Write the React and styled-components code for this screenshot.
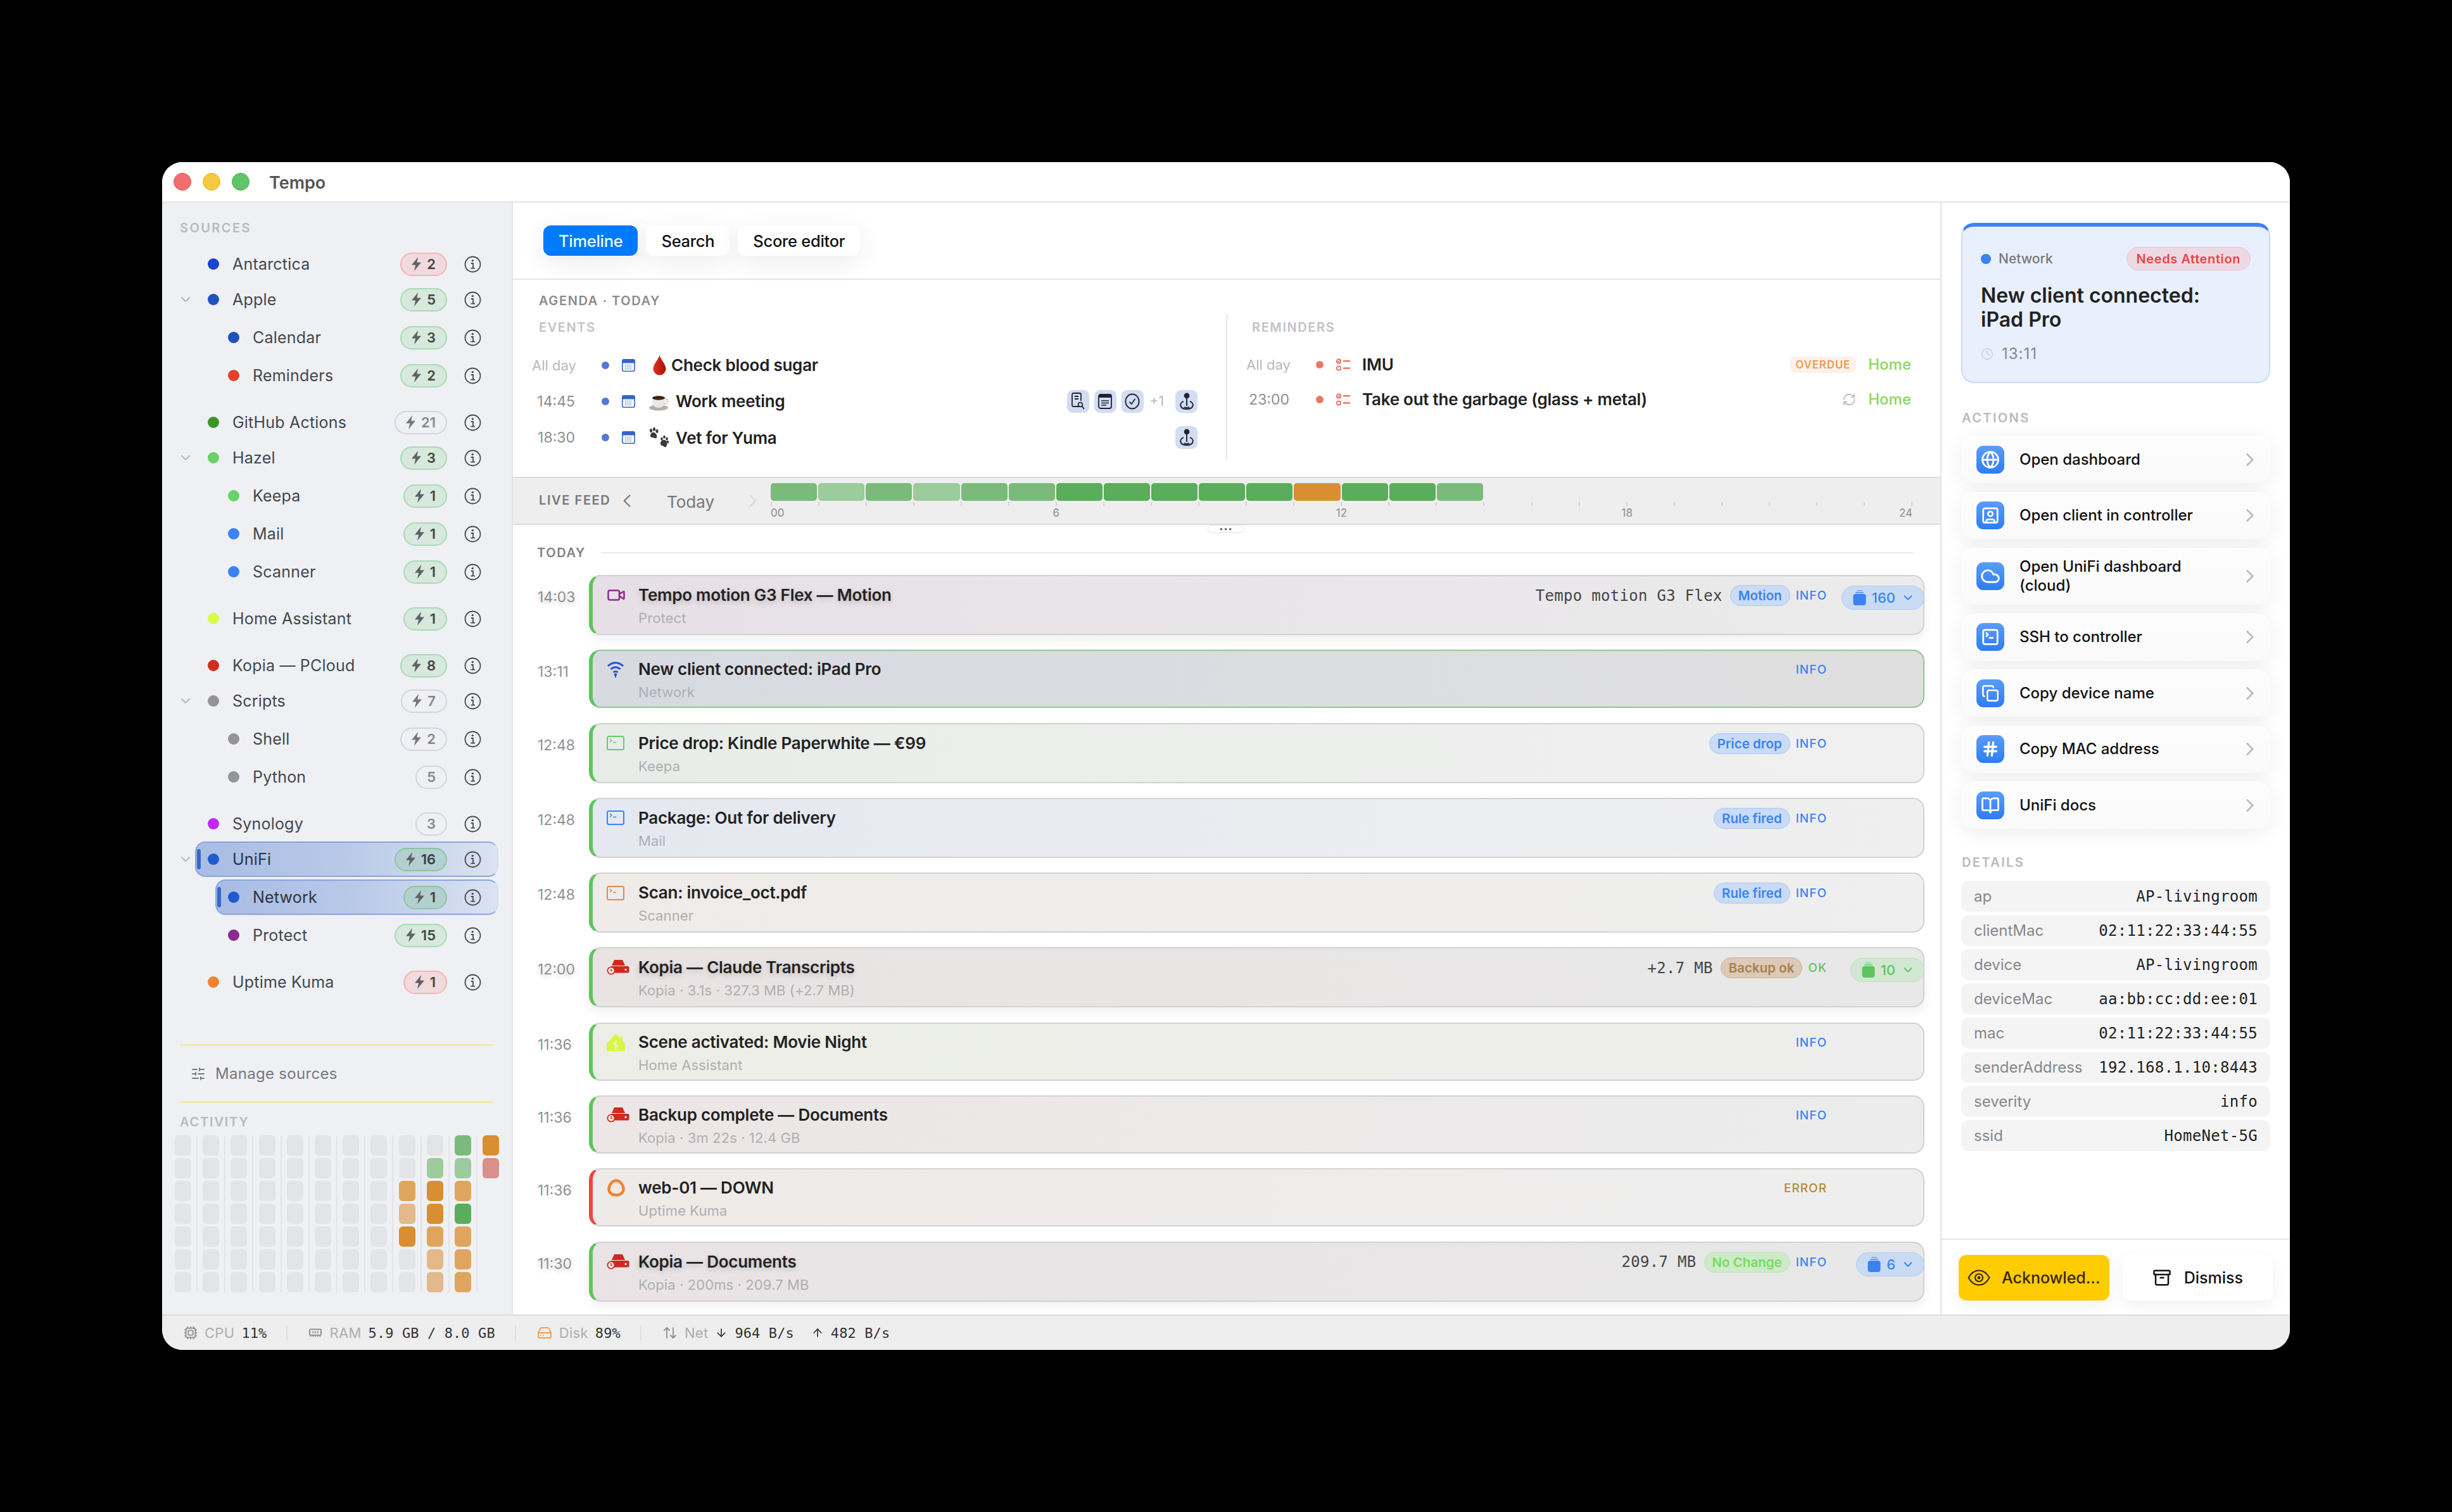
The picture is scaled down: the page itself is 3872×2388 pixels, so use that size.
import React from "react";
import styled, { createGlobalStyle } from "styled-components";
import {
  Archive,
  ArrowDown,
  ArrowUp,
  ArrowUpDown,
  BookOpen,
  ChevronDown,
  ChevronLeft,
  ChevronRight,
  Clock,
  Cloud,
  Copy,
  Cpu,
  Globe,
  Hash,
  HardDrive,
  MemoryStick,
  RefreshCw,
  SlidersHorizontal,
  SquareTerminal,
  SquareUser,
  Video,
} from "lucide-react";

const SANS = `Inter, "Noto Sans", "Liberation Sans", sans-serif`;
const MONO = `"DejaVu Sans Mono", "Liberation Mono", monospace`;

const GlobalStyle = createGlobalStyle`
  html, body {
    margin: 0;
    padding: 0;
    background: #000;
    font-family: ${SANS};
    width: 3872px;
    height: 2388px;
    overflow: hidden;
  }
  * { box-sizing: border-box; }
`;

const Page = styled.div`
  width: 3872px;
  height: 2388px;
  padding: 256px;
  background: #000;
`;

const Window = styled.div`
  width: 3360px;
  height: 1876px;
  border-radius: 32px;
  overflow: hidden;
  background: #fff;
  display: grid;
  grid-template-rows: 64px 1fr 56px;
`;

const TitleBar = styled.div`
  display: flex;
  align-items: center;
  padding-left: 18px;
  gap: 18px;
  border-bottom: 2px solid #e4e4e6;
  background: #fff;
`;

const Light = styled.span`
  width: 28px;
  height: 28px;
  border-radius: 50%;
  background: ${(p) => p.$bg};
  border: 1px solid ${(p) => p.$line};
`;

const AppName = styled.div`
  margin: 2px 0 0 13px;
  font-size: 27px;
  font-weight: 600;
  color: #555;
`;

const Body = styled.div`
  display: flex;
  min-height: 0;
`;

/* sidebar */

const Sidebar = styled.aside`
  width: 554px;
  flex: none;
  background: #eef0f4;
  border-right: 2px solid #e3e4e8;
  padding-top: 28px;
`;

const SmallHead = styled.div`
  font-size: 20px;
  line-height: 24px;
  font-weight: 600;
  letter-spacing: 2.4px;
  text-transform: uppercase;
  color: #b9b9bd;
`;

const SourcesHead = styled(SmallHead)`
  padding-left: 28px;
  margin-bottom: 17px;
`;

const TreeLine = styled.div`
  display: flex;
  align-items: center;
  padding: 0 21px 0 ${(p) => (p.$child ? 84 : 27)}px;
  margin-top: ${(p) => (p.$child ? 4 : 0)}px;
  margin-bottom: ${(p) => (p.$spaced ? 18 : 0)}px;
`;

const ChevronSlot = styled.div`
  width: 25px;
  flex: none;
  display: flex;
  margin-left: -2px;
  margin-right: 2px;
  color: #b4b4ba;
`;

const SourceRow = styled.div`
  position: relative;
  flex: 1;
  height: 56px;
  display: flex;
  align-items: center;
  padding: 0 25px 0 18px;
  border-radius: 16px;
  border: 2px solid transparent;
  ${(p) =>
    p.$active &&
    `
    background: linear-gradient(90deg, #a8bce4 0%, #b9c9e8 50%, #dbe2f1 100%);
    border-color: #88a5e0;
    border-right-color: #d6deef;
    &::before {
      content: "";
      position: absolute;
      left: 1px;
      top: 10px;
      bottom: 10px;
      width: 6px;
      border-radius: 3px;
      background: #3568cf;
    }
  `}
`;

const Dot = styled.span`
  width: ${(p) => p.$size || 18}px;
  height: ${(p) => p.$size || 18}px;
  border-radius: 50%;
  flex: none;
  background: ${(p) => p.$color};
`;

const SourceName = styled.div`
  flex: 1;
  margin-left: 21px;
  font-size: 25px;
  letter-spacing: 0.2px;
  color: ${(p) => (p.$active ? "#2e3340" : "#44474d")};
  font-weight: 400;
  white-space: nowrap;
`;

const BADGE = {
  green: { bg: "#d6e9dc", line: "#aadab3", fg: "#444" },
  red: { bg: "#f0dadd", line: "#f2b6b7", fg: "#444" },
  grey: { bg: "transparent", line: "#d4d5da", fg: "#86878c" },
  active: { bg: "#b3cfd0", line: "#8cc59e", fg: "#3a3f44" },
};

const Badge = styled.div`
  height: 37px;
  min-width: 45px;
  padding: 0 16px;
  margin-right: 27px;
  border-radius: 19px;
  display: flex;
  align-items: center;
  justify-content: center;
  gap: 9px;
  border: 2px solid ${(p) => BADGE[p.$tone].line};
  background: ${(p) => BADGE[p.$tone].bg};
  color: ${(p) => BADGE[p.$tone].fg};
  font-size: 22px;
  font-weight: 600;
`;

const Divider = styled.div`
  height: 3px;
  margin: ${(p) => p.$top || 0}px 30px 0 28px;
  background: #f5e7a2;
`;

const ManageRow = styled.div`
  height: 87px;
  display: flex;
  align-items: center;
  gap: 15px;
  padding-left: 45px;
  font-size: 24px;
  color: #77787d;
  letter-spacing: 0.3px;
`;

const ActivityHead = styled(SmallHead)`
  padding-left: 28px;
  margin-top: 18px;
  margin-bottom: 9px;
  letter-spacing: 1.8px;
`;

const ActivityGrid = styled.div`
  display: flex;
  padding-left: 20px;
`;

const ActivityCol = styled.div`
  display: flex;
  flex-direction: column;
  gap: 4px;
  padding-right: 8px;
  margin-right: 8.2px;
  border-right: 2px solid ${(p) => (p.$last ? "transparent" : "#e3e4e8")};
`;

const ActivityCell = styled.div`
  width: 26px;
  height: 32px;
  border-radius: 6px;
  background: ${(p) => p.$color};
`;

/* main column */

const Main = styled.main`
  flex: 1;
  min-width: 0;
  display: flex;
  flex-direction: column;
  background: #fff;
`;

const NavBar = styled.nav`
  height: 122px;
  flex: none;
  display: flex;
  align-items: flex-start;
  gap: 13px;
  padding: 36px 0 0 48px;
  border-bottom: 2px solid #e4e4e6;
  position: relative;
  z-index: 1;
`;

const Tab = styled.div`
  height: 48px;
  padding: 0 24px;
  display: flex;
  align-items: center;
  border-radius: 12px;
  font-size: 25.5px;
  font-weight: 500;
  letter-spacing: -0.3px;
  color: ${(p) => (p.$on ? "#e8fbff" : "#111")};
  background: ${(p) => (p.$on ? "#007aff" : "#fff")};
  box-shadow: 0 10px 40px rgba(0, 0, 0, 0.08);
`;

const Agenda = styled.section`
  height: 311px;
  flex: none;
  position: relative;
  z-index: 1;
  padding-top: 21px;
`;

const AgendaHead = styled(SmallHead)`
  padding-left: 41px;
  color: #8a8a8e;
  letter-spacing: 1.6px;
`;

const AgendaCols = styled.div`
  display: flex;
  margin-top: 9px;
`;

const AgendaCol = styled.div`
  flex: ${(p) => (p.$grow ? "0 0 1126px" : "1")};
  min-height: 231px;
  padding-top: 9px;
  padding-right: ${(p) => (p.$grow ? 45 : 46)}px;
  ${(p) => !p.$grow && `border-left: 2px solid #e9e9eb; padding-left: 30px;`}
  ${(p) => p.$grow && `padding-left: 30px;`}
`;

const ColHead = styled(SmallHead)`
  color: #c2c2c6;
  letter-spacing: 1.6px;
  padding-left: ${(p) => p.$inset}px;
  margin-bottom: 19px;
`;

const AgendaRow = styled.div`
  height: ${(p) => p.$h || 57}px;
  display: flex;
  align-items: center;
`;

const AgendaTime = styled.div`
  width: 68px;
  flex: none;
  text-align: right;
  font-size: ${(p) => (p.$faint ? 22 : 23)}px;
  white-space: nowrap;
  color: ${(p) => (p.$faint ? "#b9b9bd" : "#8e8e92")};
`;

const AgendaDot = styled(Dot)`
  margin: 0 20px 0 42px;
`;

const Emoji = styled.span`
  display: flex;
  flex: none;
  margin-left: ${(p) => p.$left}px;
  margin-right: ${(p) => p.$right}px;
`;

const AgendaTitle = styled.div`
  flex: 1;
  margin-left: ${(p) => p.$left || 0}px;
  font-size: 26px;
  font-weight: 600;
  letter-spacing: -0.25px;
  color: #222;
  white-space: nowrap;
`;

const MiniChip = styled.span`
  width: 35px;
  height: 36px;
  border-radius: 9px;
  background: #d3dcf3;
  display: flex;
  align-items: center;
  justify-content: center;
  margin-left: ${(p) => p.$left || 8}px;
`;

const PlusOne = styled.span`
  margin-left: 10px;
  font-size: 21px;
  color: #b9b9bd;
`;

const Overdue = styled.span`
  height: 26px;
  padding: 0 9px;
  border-radius: 9px;
  display: flex;
  align-items: center;
  font-size: 17px;
  font-weight: 600;
  letter-spacing: 0.8px;
  color: #f19a4f;
  background: #fdf2ea;
  margin-right: 19px;
`;

const Place = styled.span`
  font-size: 24px;
  font-weight: 500;
  color: #8fd45f;
`;

const LiveBar = styled.div`
  position: relative;
  height: 76px;
  flex: none;
  display: flex;
  align-items: flex-start;
  background: #eeeeee;
  border-top: 2px solid #dcdcdc;
  border-bottom: 2px solid #dcdcdc;
`;

const LiveHead = styled(SmallHead)`
  color: #77777b;
  margin: 23px 0 0 41px;
  letter-spacing: 1.6px;
  width: 122px;
  white-space: nowrap;
`;

const BarNav = styled.div`
  display: flex;
  align-items: center;
  height: 72px;
  color: ${(p) => (p.$faint ? "#d6d6d8" : "#777")};
`;

const TodayText = styled.div`
  font-size: 26px;
  color: #77777b;
  margin-left: 46px;
  width: 119px;
  line-height: 76px;
`;

const Timeline = styled.div`
  position: absolute;
  left: 407px;
  top: 8px;
  width: 1803px;
`;

const BarRow = styled.div`
  display: flex;
  height: 28px;
`;

const HourBar = styled.div`
  width: 75.125px;
  padding-right: 2px;
  &::after {
    content: "";
    display: block;
    height: 100%;
    border-radius: 5px;
    background: ${(p) => p.$color};
  }
`;

const TickRow = styled.div`
  display: flex;
  justify-content: space-between;
  margin-top: 2px;
`;

const Tick = styled.span`
  width: 2px;
  height: 6px;
  background: #d2d2d4;
`;

const AxisRow = styled.div`
  display: flex;
  justify-content: space-between;
  margin-top: 1px;
  font-size: 17px;
  color: #8c8c90;
`;

const AxisLabel = styled.span`
  width: 0;
  display: flex;
  white-space: nowrap;
  justify-content: ${(p) => p.$align || "center"};
`;

const Handle = styled.div`
  position: absolute;
  left: 1097px;
  bottom: -15px;
  width: 58px;
  height: 13px;
  background: #fff;
  border: 1px solid #e2e2e4;
  border-radius: 6px;
  display: flex;
  align-items: center;
  justify-content: center;
  gap: 2px;
  &::before {
    content: "•••";
    font-size: 11px;
    letter-spacing: 1px;
    color: #66666a;
    line-height: 11px;
  }
`;

const Feed = styled.div`
  flex: 1;
  min-height: 0;
  overflow: hidden;
  padding: 30px 25px 0 38px;
`;

const FeedHead = styled.div`
  display: flex;
  align-items: center;
  gap: 25px;
  height: 28px;
  margin-bottom: 21px;
`;

const FeedHeadLabel = styled(SmallHead)`
  color: #808084;
  letter-spacing: 1.6px;
`;

const FeedHeadRule = styled.div`
  flex: 1;
  height: 2px;
  background: #e8e8ea;
  margin-right: 18px;
`;

const FeedList = styled.div`
  display: flex;
  flex-direction: column;
  gap: 23.3px;
`;

const FeedRow = styled.div`
  display: flex;
`;

const FeedTime = styled.div`
  width: 82px;
  flex: none;
  padding-top: 21px;
  padding-left: 1px;
  font-size: 23px;
  line-height: 28px;
  color: #8f8f93;
  ${(p) => p.$stacked && `text-shadow: 0 3px 8px rgba(0, 0, 0, 0.22);`}
`;

const Card = styled.article`
  position: relative;
  flex: 1;
  height: ${(p) => (p.$tall ? 95 : 92)}px;
  display: flex;
  align-items: flex-start;
  padding: ${(p) => (p.$tall ? 14 : 13)}px 152px 0 22px;
  border-radius: 18px;
  border: 2px solid ${(p) => (p.$selected ? "#8dca8d" : "#d2d2d2")};
  border-left: 6px solid ${(p) => p.$bar};
  background: linear-gradient(90deg, ${(p) => p.$tint} 0%, ${(p) => p.$end} 100%);
  ${(p) => p.$stacked && `box-shadow: 0 8px 16px rgba(0, 0, 0, 0.06);`}
`;

const CardIcon = styled.div`
  width: 50px;
  flex: none;
  height: 32px;
  display: flex;
  align-items: center;
`;

const CardText = styled.div`
  flex: 1;
  min-width: 0;
`;

const CardTitle = styled.div`
  font-size: 26px;
  line-height: 32px;
  font-weight: 600;
  letter-spacing: -0.25px;
  color: #222;
  white-space: nowrap;
  ${(p) => p.$stacked && `text-shadow: 0 3px 8px rgba(0, 0, 0, 0.2);`}
`;

const CardSub = styled.div`
  margin-top: 6px;
  font-size: 22px;
  letter-spacing: 0.1px;
  line-height: 28px;
  color: #aeaeb2;
  white-space: nowrap;
`;

const CardMeta = styled.div`
  display: flex;
  align-items: center;
  height: 33px;
  gap: 9px;
`;

const MonoText = styled.span`
  font-family: ${MONO};
  font-size: 24px;
  letter-spacing: 0.3px;
  color: #444;
  margin-right: 3px;
  white-space: nowrap;
`;

const TAG = {
  blue: { bg: "#c9dbf5", line: "#a9c8f7", fg: "#3b82f6" },
  brown: { bg: "#dcc9b7", line: "#ceb196", fg: "#a9804f" },
  green: { bg: "#cfe9cb", line: "#bde6b9", fg: "#74df55" },
};

const Tag = styled.span`
  height: 33px;
  padding: 0 12px;
  border-radius: 17px;
  display: flex;
  align-items: center;
  font-size: 20.5px;
  font-weight: 600;
  white-space: nowrap;
  border: 1px solid ${(p) => TAG[p.$tone].line};
  background: ${(p) => TAG[p.$tone].bg};
  color: ${(p) => TAG[p.$tone].fg};
`;

const LEVEL = { INFO: "#3b82f6", OK: "#5fc45f", ERROR: "#b78a2f" };

const Level = styled.span`
  font-size: 19px;
  font-weight: 500;
  letter-spacing: 1px;
  color: ${(p) => LEVEL[p.$level]};
`;

const STACK = {
  blue: { bg: "#c9dbf3", line: "#aecbf5", fg: "#3b82f6" },
  green: { bg: "#d2e7d2", line: "#b9e2b9", fg: "#5fc45f" },
};

const StackChip = styled.div`
  position: absolute;
  right: -2px;
  top: 15px;
  height: 38px;
  padding: 0 14px 0 17px;
  border-radius: 19px;
  display: flex;
  align-items: center;
  gap: 9px;
  border: 1px solid ${(p) => STACK[p.$tone].line};
  background: ${(p) => STACK[p.$tone].bg};
  color: ${(p) => STACK[p.$tone].fg};
  font-size: 22px;
  font-weight: 500;
`;

/* right panel */

const Panel = styled.aside`
  width: 552px;
  flex: none;
  display: flex;
  flex-direction: column;
  border-left: 2px solid #e4e4e6;
`;

const PanelScroll = styled.div`
  flex: 1;
  min-height: 0;
  padding: 32px 31px 0 31px;
`;

const Summary = styled.div`
  height: 253px;
  border-radius: 20px;
  border: 2px solid #c5dbfb;
  border-top: 6px solid #3b82f6;
  background: #e9f0fd;
  padding: 33px 29px 0 29px;
`;

const SummaryTop = styled.div`
  display: flex;
  align-items: center;
  height: 37px;
  margin-top: -1px;
`;

const SummarySource = styled.div`
  flex: 1;
  margin-left: 12px;
  font-size: 21px;
  font-weight: 500;
  color: #77787d;
`;

const Attention = styled.div`
  height: 37px;
  padding: 0 15px;
  border-radius: 19px;
  display: flex;
  align-items: center;
  border: 1px solid #f3c0c8;
  background: #edd9e3;
  color: #ef4444;
  font-size: 20px;
  font-weight: 600;
  letter-spacing: 0.6px;
`;

const SummaryTitle = styled.div`
  margin-top: 21px;
  font-size: 32px;
  line-height: 38px;
  font-weight: 600;
  color: #222;
`;

const SummaryTime = styled.div`
  margin-top: 20px;
  display: flex;
  align-items: center;
  gap: 13px;
  font-size: 24px;
  color: #85868b;
  letter-spacing: 1px;
`;

const PanelHead = styled(SmallHead)`
  margin-top: ${(p) => p.$top}px;
  margin-bottom: ${(p) => p.$bottom}px;
  padding-left: 1px;
`;

const ActionList = styled.div`
  display: flex;
  flex-direction: column;
  gap: 13.5px;
`;

const Action = styled.div`
  min-height: ${(p) => (p.$wide ? 90 : 75)}px;
  padding: 0 24px;
  display: flex;
  align-items: center;
  background: linear-gradient(180deg, #fdfdfd, #fafafa);
  border-radius: 20px;
  box-shadow: 0 6px 32px rgba(0, 0, 0, 0.07);
  color: #bdbdc0;
`;

const ActionIcon = styled.span`
  width: 44px;
  height: 44px;
  flex: none;
  border-radius: 11px;
  background: linear-gradient(180deg, #5b9cfc, #2f7cf0);
  display: flex;
  align-items: center;
  justify-content: center;
  color: #fff;
`;

const ActionLabel = styled.div`
  flex: 1;
  margin-left: 24px;
  font-size: 24px;
  line-height: 30px;
  font-weight: 500;
  color: #111;
  max-width: 320px;
`;

const ActionArrow = styled.span`
  display: flex;
  margin-left: auto;
  margin-right: -9px;
`;

const DetailList = styled.div`
  display: flex;
  flex-direction: column;
  gap: 5px;
`;

const DetailRow = styled.div`
  height: 49px;
  padding: 0 20px;
  display: flex;
  align-items: center;
  justify-content: space-between;
  background: #f4f4f5;
  border-radius: 12px;
`;

const DetailKey = styled.span`
  font-size: 24px;
  color: #87878b;
`;

const DetailValue = styled.span`
  font-family: ${MONO};
  font-size: 24px;
  letter-spacing: 0.3px;
  color: #222;
`;

const PanelFooter = styled.div`
  height: 120px;
  flex: none;
  display: flex;
  gap: 21px;
  padding: 24px 27px 0 27px;
  border-top: 2px solid #e4e4e6;
`;

const FooterButton = styled.div`
  flex: 1;
  height: 72px;
  display: flex;
  align-items: center;
  justify-content: center;
  gap: ${(p) => (p.$main ? 18 : 20)}px;
  border-radius: 12px;
  font-size: 25px;
  font-weight: 500;
  white-space: nowrap;
  color: ${(p) => (p.$main ? "#3a2500" : "#111")};
  background: ${(p) => (p.$main ? "#ffcc00" : "#fff")};
  box-shadow: 0 8px 24px rgba(0, 0, 0, 0.06);
`;

/* status bar */

const StatusBar = styled.footer`
  display: flex;
  align-items: center;
  padding-left: 34px;
  background: #eeeeee;
  border-top: 2px solid #dcdcdc;
`;

const StatusItem = styled.div`
  display: flex;
  align-items: center;
  gap: 11px;
  color: ${(p) => p.$icon || "#8e8e92"};
  padding-right: 31px;
  margin-right: 33px;
  border-right: ${(p) => (p.$end ? "none" : "2px solid #dedede")};
  height: 24px;
`;

const StatusLabel = styled.span`
  font-size: 22px;
  letter-spacing: 0.3px;
  color: #adadb1;
`;

const StatusValue = styled.span`
  font-family: ${MONO};
  font-size: 22px;
  letter-spacing: 0.1px;
  color: #333;
  white-space: nowrap;
`;

/* drawings */

const Bolt = ({ dim }) => (
  <svg width="15" height="22" viewBox="0 0 15 22">
    <path d="M10 0 0 12.6h6.2L4 22l11-13.4H8.4L10 0z" fill={dim ? "#777" : "#5e6166"} />
  </svg>
);

const InfoIcon = () => (
  <svg width="27" height="27" viewBox="0 0 27 27" fill="none" style={{ flex: "none" }}>
    <circle cx="13.5" cy="13.5" r="12" stroke="#45474c" strokeWidth="1.8" />
    <circle cx="13.3" cy="7.6" r="1.7" fill="#45474c" />
    <path d="M10.8 12h3.2v7.4M10.4 19.6h6.6" stroke="#45474c" strokeWidth="1.8" />
  </svg>
);

const CalendarIcon = () => (
  <svg width="21" height="20" viewBox="0 0 21 20" style={{ flex: "none" }}>
    <rect x="0.8" y="0.8" width="19.4" height="18.4" rx="2.4" fill="#fff" stroke="#3565c7" strokeWidth="1.6" />
    <path d="M1 3a2 2 0 0 1 2-2h15a2 2 0 0 1 2 2v3.5H1z" fill="#3565c7" />
    <path d="M5 9.5h11M5 12.5h11M5 15.5h11" stroke="#6a8bd4" strokeWidth="1.6" strokeDasharray="1.6 1.2" />
  </svg>
);

const RemindIcon = () => (
  <svg width="23" height="20" viewBox="0 0 23 20" fill="none" style={{ flex: "none" }}>
    <circle cx="4" cy="4.4" r="3.2" stroke="#ea5a45" strokeWidth="1.5" />
    <path d="M2.5 4.4l1.2 1.2L5.6 3" stroke="#ea5a45" strokeWidth="1.2" />
    <circle cx="4" cy="15.6" r="3.2" stroke="#ea5a45" strokeWidth="1.5" />
    <path d="M11 4.2h11M11 15.6h11" stroke="#ea5a45" strokeWidth="2" />
  </svg>
);

const DropEmoji = () => (
  <svg width="21" height="32" viewBox="0 0 21 32">
    <defs>
      <linearGradient id="drop" x1="0" x2="1">
        <stop offset="0" stopColor="#e0301e" />
        <stop offset="1" stopColor="#a81208" />
      </linearGradient>
    </defs>
    <path d="M10.5 0c1 6 10 14 10 21.5a10 10 0 0 1-20 0C.5 14 9.5 6 10.5 0z" fill="url(#drop)" />
  </svg>
);

const CoffeeEmoji = () => (
  <svg width="33" height="30" viewBox="0 0 33 30">
    <path d="M14 1c-1 2 1 3 0 5" stroke="#d8d8d8" strokeWidth="1" fill="none" />
    <ellipse cx="16" cy="25" rx="15" ry="4.5" fill="#b5b0a8" />
    <path d="M6 9h20v6c0 6-4 10-10 10S6 21 6 15z" fill="#ece9e4" />
    <path d="M26 11c6-1 6 8-2 8" stroke="#d6d2cb" strokeWidth="2" fill="none" />
    <ellipse cx="16" cy="9.5" rx="10" ry="3.2" fill="#3b2415" />
  </svg>
);

const PawEmoji = () => (
  <svg width="33" height="32" viewBox="0 0 33 32" fill="#3a3a3c">
    <ellipse cx="4" cy="5" rx="2" ry="3" />
    <ellipse cx="9" cy="3" rx="2" ry="3" />
    <ellipse cx="13.5" cy="6" rx="2" ry="3" />
    <path d="M3 13c0-4 3-6 6-5s5 5 4 8-4 0-6 0-4 0-4-3z" />
    <ellipse cx="21" cy="18" rx="1.8" ry="2.6" />
    <ellipse cx="25" cy="15" rx="1.8" ry="2.6" />
    <ellipse cx="29" cy="18" rx="1.8" ry="2.6" />
    <ellipse cx="30.5" cy="23" rx="1.6" ry="2.2" />
    <path d="M19 25c0-4 4-6 7-5s4 4 3 8-3 4-5 2-5 0-5-5z" />
  </svg>
);

const DocSearch = () => (
  <svg width="22" height="28" viewBox="0 0 22 28" fill="none" stroke="#1d2433" strokeWidth="1.8">
    <path d="M15 22H4a2 2 0 0 1-2-2V3a2 2 0 0 1 2-2h10a2 2 0 0 1 2 2v10" />
    <path d="M6 6h6M6 10h6" />
    <circle cx="15" cy="19" r="3.4" />
    <path d="M17.6 21.6 21 26" />
  </svg>
);

const NotesIcon = () => (
  <svg width="22" height="24" viewBox="0 0 22 24" fill="none">
    <rect x="1" y="1" width="20" height="22" rx="3" stroke="#1d2433" strokeWidth="1.8" />
    <path d="M1 3a2 2 0 0 1 2-2h16a2 2 0 0 1 2 2v3H1z" fill="#1d2433" />
    <path d="M5 11h12M5 14.5h12M5 18h8" stroke="#1d2433" strokeWidth="1.6" />
  </svg>
);

const CheckRound = () => (
  <svg width="24" height="26" viewBox="0 0 24 26" fill="none" stroke="#1d2433" strokeWidth="1.8">
    <ellipse cx="12" cy="13" rx="10.6" ry="11.5" />
    <path d="M7.5 13.5l3 3.5 6-8" />
  </svg>
);

const JoyIcon = () => (
  <svg width="24" height="28" viewBox="0 0 24 28" fill="none" stroke="#1d2433" strokeWidth="2">
    <circle cx="12" cy="5" r="3.4" fill="#1d2433" />
    <path d="M12 8v13" />
    <path d="M7 14c-7 2-7 12 5 12s12-10 5-12" />
    <path d="M8 23c2 1 6 1 8 0" />
  </svg>
);

const KopiaIcon = () => (
  <svg width="36" height="24" viewBox="0 0 36 24">
    <path d="M12 0h13l4 9H8z" fill="#cf2a1b" />
    <path d="M7 10h26a2.6 2.6 0 0 1 2.6 2.6V18a2.6 2.6 0 0 1-2.6 2.6H7z" fill="#cf2a1b" />
    <circle cx="30" cy="15.4" r="1.7" fill="#fff" />
    <circle cx="7" cy="17" r="5.6" fill="#f2e9e8" stroke="#cf2a1b" strokeWidth="1.8" />
    <path d="M7 14v3.4h2" stroke="#cf2a1b" strokeWidth="1.4" fill="none" />
  </svg>
);

const HomeIcon = () => (
  <svg width="29" height="28" viewBox="0 0 29 28">
    <path d="M14.5 0 22 8v-3h3v7l4 4v12H0V16z" fill="#d9f54a" />
    <path d="M14.5 26V11M14.5 19l-4-4M14.5 22l4-4" stroke="#f0f3e4" strokeWidth="1.6" fill="none" />
  </svg>
);

const KumaIcon = () => (
  <svg width="30" height="28" viewBox="0 0 30 28" fill="none">
    <path d="M15 2.5c6 0 11.5 7 11.5 14 0 5.500-5 9-11.500 9S3.500 22 3.500 16.500C3.500 9.500 9 2.500 15 2.500z" stroke="#f2842f" strokeWidth="4.4" />
  </svg>
);

const WifiIcon = () => (
  <svg width="28" height="28" viewBox="0 0 28 28" fill="none" stroke="#2259c9" strokeWidth="3">
    <path d="M2 9c7-7 17-7 24 0" />
    <path d="M6.500 14c4.500-4.500 10.500-4.500 15 0" />
    <path d="M10.500 19c2-2 5-2 7 0" />
    <path d="M14 22v5" strokeWidth="2" />
    <circle cx="14" cy="22.500" r="2.200" fill="#2259c9" stroke="none" />
  </svg>
);

const TermIcon = ({ color }) => (
  <svg width="28" height="23" viewBox="0 0 28 23" fill="none" stroke={color}>
    <rect x="1" y="1" width="26" height="21" rx="2.500" strokeWidth="2" />
    <path d="M5 5l3 2.600-3 2.600M10 10.500h5" strokeWidth="1.400" />
  </svg>
);

const StackGlyph = ({ color }) => (
  <svg width="21" height="24" viewBox="0 0 21 24" fill={color}>
    <rect x="6" y="0" width="9" height="1.600" rx="0.800" opacity="0.6" />
    <rect x="4" y="3" width="13" height="1.800" rx="0.900" opacity="0.8" />
    <rect x="0.500" y="6" width="20" height="18" rx="4" />
  </svg>
);

const EyeIcon = () => (
  <svg width="36" height="28" viewBox="0 0 36 28" fill="none" stroke="#3a2500" strokeWidth="2.200">
    <path d="M1.500 14C6 6 11 2.500 18 2.500S30 6 34.500 14C30 22 25 25.500 18 25.500S6 22 1.500 14z" />
    <circle cx="18" cy="14" r="6" />
    <circle cx="18" cy="14" r="2.400" fill="#3a2500" stroke="none" />
  </svg>
);

/* data */

const DOTS = {
  navy: "#1a43d0",
  royal: "#2150c0",
  red: "#e44226",
  forest: "#3f9428",
  mint: "#68d168",
  blue: "#3b82f6",
  lime: "#dcfb4c",
  kopia: "#d22d1c",
  grey: "#939398",
  violet: "#c227f5",
  unifi: "#2059d0",
  plum: "#8b2a8f",
  orange: "#f0812f",
};

const SOURCES = [
  { name: "Antarctica", dot: DOTS.navy, tone: "red", n: 2 },
  { name: "Apple", dot: DOTS.royal, tone: "green", n: 5, open: true },
  { name: "Calendar", dot: DOTS.royal, tone: "green", n: 3, child: true },
  { name: "Reminders", dot: DOTS.red, tone: "green", n: 2, child: true, spaced: true },
  { name: "GitHub Actions", dot: DOTS.forest, tone: "grey", n: 21 },
  { name: "Hazel", dot: DOTS.mint, tone: "green", n: 3, open: true },
  { name: "Keepa", dot: DOTS.mint, tone: "green", n: 1, child: true },
  { name: "Mail", dot: DOTS.blue, tone: "green", n: 1, child: true },
  { name: "Scanner", dot: DOTS.blue, tone: "green", n: 1, child: true, spaced: true },
  { name: "Home Assistant", dot: DOTS.lime, tone: "green", n: 1, spaced: true },
  { name: "Kopia — PCloud", dot: DOTS.kopia, tone: "green", n: 8 },
  { name: "Scripts", dot: DOTS.grey, tone: "grey", n: 7, open: true },
  { name: "Shell", dot: DOTS.grey, tone: "grey", n: 2, child: true },
  { name: "Python", dot: DOTS.grey, tone: "grey", n: 5, child: true, spaced: true, plain: true },
  { name: "Synology", dot: DOTS.violet, tone: "grey", n: 3, plain: true },
  { name: "UniFi", dot: DOTS.unifi, tone: "active", n: 16, open: true, active: true },
  { name: "Network", dot: DOTS.unifi, tone: "active", n: 1, child: true, active: true },
  { name: "Protect", dot: DOTS.plum, tone: "green", n: 15, child: true, spaced: true },
  { name: "Uptime Kuma", dot: DOTS.orange, tone: "red", n: 1 },
];

const C = {
  e: "#e3e4e8",
  g: "#7aba7a",
  l: "#9ccb9c",
  d: "#5aad5a",
  o: "#d98e32",
  m: "#dfa55f",
  p: "#e3b88a",
  r: "#d98f8a",
};

const ACTIVITY = [
  "eeeeeee",
  "eeeeeee",
  "eeeeeee",
  "eeeeeee",
  "eeeeeee",
  "eeeeeee",
  "eeeeeee",
  "eeeeeee",
  "eempoee",
  "eloompp",
  "glmdmmm",
  "or",
];

const HOURS = "glglggdddddoddg".split("");

const FEED = [
  { time: "14:03", title: "Tempo motion G3 Flex — Motion", sub: "Protect", icon: <Video size={30} color="#8b2a8f" strokeWidth={2} />, tint: "#e6e0e6", end: "#ebebeb", mono: "Tempo motion G3 Flex", tag: ["blue", "Motion"], level: "INFO", stack: ["blue", 160], tall: true },
  { time: "13:11", title: "New client connected: iPad Pro", sub: "Network", icon: <WifiIcon />, tint: "#d8dae2", end: "#dfdfdf", level: "INFO", selected: true },
  { time: "12:48", title: "Price drop: Kindle Paperwhite — €99", sub: "Keepa", icon: <TermIcon color="#63cf63" />, tint: "#e8ece8", end: "#f0f0f0", tag: ["blue", "Price drop"], level: "INFO", tall: true },
  { time: "12:48", title: "Package: Out for delivery", sub: "Mail", icon: <TermIcon color="#3b82f6" />, tint: "#e5e8f0", end: "#efefef", tag: ["blue", "Rule fired"], level: "INFO", tall: true },
  { time: "12:48", title: "Scan: invoice_oct.pdf", sub: "Scanner", icon: <TermIcon color="#e08a4a" />, tint: "#eeebe8", end: "#efefef", tag: ["blue", "Rule fired"], level: "INFO", tall: true },
  { time: "12:00", title: "Kopia — Claude Transcripts", sub: "Kopia · 3.1s · 327.3 MB (+2.7 MB)", icon: <KopiaIcon />, tint: "#e9e3e3", end: "#e8e8e8", mono: "+2.7 MB", tag: ["brown", "Backup ok"], level: "OK", stack: ["green", 10], tall: true },
  { time: "11:36", title: "Scene activated: Movie Night", sub: "Home Assistant", icon: <HomeIcon />, tint: "#eceee6", end: "#eeeeee", level: "INFO" },
  { time: "11:36", title: "Backup complete — Documents", sub: "Kopia · 3m 22s · 12.4 GB", icon: <KopiaIcon />, tint: "#ece6e6", end: "#ececec", level: "INFO" },
  { time: "11:36", title: "web-01 — DOWN", sub: "Uptime Kuma", icon: <KumaIcon />, tint: "#eeeae8", end: "#eeeeee", level: "ERROR", bar: "#ef4444" },
  { time: "11:30", title: "Kopia — Documents", sub: "Kopia · 200ms · 209.7 MB", icon: <KopiaIcon />, tint: "#e9e3e5", end: "#e8e8e8", mono: "209.7 MB", tag: ["green", "No Change"], level: "INFO", stack: ["blue", 6], tall: true },
];

const ACTIONS = [
  { label: "Open dashboard", icon: <Globe size={30} strokeWidth={2.2} /> },
  { label: "Open client in controller", icon: <SquareUser size={30} strokeWidth={2.2} /> },
  { label: "Open UniFi dashboard (cloud)", icon: <Cloud size={32} strokeWidth={2.2} />, wide: true },
  { label: "SSH to controller", icon: <SquareTerminal size={30} strokeWidth={2.2} /> },
  { label: "Copy device name", icon: <Copy size={28} strokeWidth={2.2} /> },
  { label: "Copy MAC address", icon: <Hash size={28} strokeWidth={2.8} /> },
  { label: "UniFi docs", icon: <BookOpen size={30} strokeWidth={2.2} /> },
];

const DETAILS = [
  ["ap", "AP-livingroom"],
  ["clientMac", "02:11:22:33:44:55"],
  ["device", "AP-livingroom"],
  ["deviceMac", "aa:bb:cc:dd:ee:01"],
  ["mac", "02:11:22:33:44:55"],
  ["senderAddress", "192.168.1.10:8443"],
  ["severity", "info"],
  ["ssid", "HomeNet-5G"],
];

const Source = ({ item }) => (
  <TreeLine $child={item.child} $spaced={item.spaced}>
    {!item.child && <ChevronSlot>{item.open && <ChevronDown size={24} strokeWidth={1.8} />}</ChevronSlot>}
    <SourceRow $active={item.active}>
      <Dot $color={item.dot} />
      <SourceName $active={item.active}>{item.name}</SourceName>
      <Badge $tone={item.tone}>
        {!item.plain && <Bolt dim={item.tone === "grey"} />}
        {item.n}
      </Badge>
      <InfoIcon />
    </SourceRow>
  </TreeLine>
);

export default function App() {
  return (
    <Page>
      <GlobalStyle />
      <Window>
        <TitleBar>
          <Light $bg="#f26d6d" $line="#e65353" />
          <Light $bg="#f5c842" $line="#ecb81f" />
          <Light $bg="#62c466" $line="#45b44c" />
          <AppName>Tempo</AppName>
        </TitleBar>

        <Body>
          <Sidebar>
            <SourcesHead>Sources</SourcesHead>
            {SOURCES.map((s) => (
              <Source key={s.name} item={s} />
            ))}
            <Divider $top={70} />
            <ManageRow>
              <SlidersHorizontal size={24} strokeWidth={1.8} />
              Manage sources
            </ManageRow>
            <Divider />
            <ActivityHead>Activity</ActivityHead>
            <ActivityGrid>
              {ACTIVITY.map((col, i) => (
                <ActivityCol key={i} $last={i === ACTIVITY.length - 1}>
                  {col.split("").map((c, j) => (
                    <ActivityCell key={j} $color={C[c]} />
                  ))}
                </ActivityCol>
              ))}
            </ActivityGrid>
          </Sidebar>

          <Main>
            <NavBar>
              <Tab $on>Timeline</Tab>
              <Tab>Search</Tab>
              <Tab>Score editor</Tab>
            </NavBar>

            <Agenda>
              <AgendaHead>Agenda · Today</AgendaHead>
              <AgendaCols>
                <AgendaCol $grow>
                  <ColHead $inset={11}>Events</ColHead>
                  <AgendaRow>
                    <AgendaTime $faint>All day</AgendaTime>
                    <AgendaDot $size={12} $color="#5279d4" />
                    <CalendarIcon />
                    <Emoji $left={28} $right={8}><DropEmoji /></Emoji>
                    <AgendaTitle>Check blood sugar</AgendaTitle>
                  </AgendaRow>
                  <AgendaRow>
                    <AgendaTime>14:45</AgendaTime>
                    <AgendaDot $size={12} $color="#5279d4" />
                    <CalendarIcon />
                    <Emoji $left={21} $right={10}><CoffeeEmoji /></Emoji>
                    <AgendaTitle>Work meeting</AgendaTitle>
                    <MiniChip><DocSearch /></MiniChip>
                    <MiniChip><NotesIcon /></MiniChip>
                    <MiniChip><CheckRound /></MiniChip>
                    <PlusOne>+1</PlusOne>
                    <MiniChip $left={18}><JoyIcon /></MiniChip>
                  </AgendaRow>
                  <AgendaRow $h={58}>
                    <AgendaTime>18:30</AgendaTime>
                    <AgendaDot $size={12} $color="#5279d4" />
                    <CalendarIcon />
                    <Emoji $left={21} $right={10}><PawEmoji /></Emoji>
                    <AgendaTitle>Vet for Yuma</AgendaTitle>
                    <MiniChip><JoyIcon /></MiniChip>
                  </AgendaRow>
                </AgendaCol>
                <AgendaCol>
                  <ColHead $inset={9}>Reminders</ColHead>
                  <AgendaRow $h={55}>
                    <AgendaTime $faint>All day</AgendaTime>
                    <AgendaDot $size={12} $color="#ec7763" />
                    <RemindIcon />
                    <AgendaTitle $left={18}>IMU</AgendaTitle>
                    <Overdue>OVERDUE</Overdue>
                    <Place>Home</Place>
                  </AgendaRow>
                  <AgendaRow $h={55}>
                    <AgendaTime>23:00</AgendaTime>
                    <AgendaDot $size={12} $color="#ec7763" />
                    <RemindIcon />
                    <AgendaTitle $left={18}>Take out the garbage (glass + metal)</AgendaTitle>
                    <RefreshCw size={22} color="#bdbdc0" strokeWidth={2} style={{ marginRight: 19 }} />
                    <Place>Home</Place>
                  </AgendaRow>
                </AgendaCol>
              </AgendaCols>
            </Agenda>

            <LiveBar>
              <LiveHead>Live Feed</LiveHead>
              <BarNav><ChevronLeft size={34} strokeWidth={1.5} /></BarNav>
              <TodayText>Today</TodayText>
              <BarNav $faint><ChevronRight size={34} strokeWidth={1.5} /></BarNav>
              <Timeline>
                <BarRow>
                  {HOURS.map((c, i) => (
                    <HourBar key={i} $color={C[c]} />
                  ))}
                </BarRow>
                <TickRow>
                  {Array.from({ length: 25 }, (_, i) => (
                    <Tick key={i} />
                  ))}
                </TickRow>
                <AxisRow>
                  <AxisLabel $align="flex-start">00</AxisLabel>
                  <AxisLabel>6</AxisLabel>
                  <AxisLabel>12</AxisLabel>
                  <AxisLabel>18</AxisLabel>
                  <AxisLabel $align="flex-end">24</AxisLabel>
                </AxisRow>
              </Timeline>
              <Handle />
            </LiveBar>

            <Feed>
              <FeedHead>
                <FeedHeadLabel>Today</FeedHeadLabel>
                <FeedHeadRule />
              </FeedHead>
              <FeedList>
                {FEED.map((f, i) => (
                  <FeedRow key={i}>
                    <FeedTime $stacked={!!f.stack}>{f.time}</FeedTime>
                    <Card
                      $tall={f.tall}
                      $selected={f.selected}
                      $stacked={!!f.stack}
                      $bar={f.bar || "#5fc45f"}
                      $tint={f.tint}
                      $end={f.end}
                    >
                      <CardIcon>{f.icon}</CardIcon>
                      <CardText>
                        <CardTitle $stacked={!!f.stack}>{f.title}</CardTitle>
                        <CardSub>{f.sub}</CardSub>
                      </CardText>
                      <CardMeta>
                        {f.mono && <MonoText>{f.mono}</MonoText>}
                        {f.tag && <Tag $tone={f.tag[0]}>{f.tag[1]}</Tag>}
                        <Level $level={f.level}>{f.level}</Level>
                      </CardMeta>
                      {f.stack && (
                        <StackChip $tone={f.stack[0]}>
                          <StackGlyph color={STACK[f.stack[0]].fg} />
                          {f.stack[1]}
                          <ChevronDown size={22} strokeWidth={2} />
                        </StackChip>
                      )}
                    </Card>
                  </FeedRow>
                ))}
              </FeedList>
            </Feed>
          </Main>

          <Panel>
            <PanelScroll>
              <Summary>
                <SummaryTop>
                  <Dot $size={16} $color="#3b82f6" />
                  <SummarySource>Network</SummarySource>
                  <Attention>Needs Attention</Attention>
                </SummaryTop>
                <SummaryTitle>
                  New client connected:
                  <br />
                  iPad Pro
                </SummaryTitle>
                <SummaryTime>
                  <Clock size={20} color="#cfd3da" strokeWidth={2} />
                  13:11
                </SummaryTime>
              </Summary>

              <PanelHead $top={43} $bottom={16}>Actions</PanelHead>
              <ActionList>
                {ACTIONS.map((a) => (
                  <Action key={a.label} $wide={a.wide}>
                    <ActionIcon>{a.icon}</ActionIcon>
                    <ActionLabel>{a.label}</ActionLabel>
                    <ActionArrow><ChevronRight size={34} strokeWidth={2} /></ActionArrow>
                  </Action>
                ))}
              </ActionList>

              <PanelHead $top={41} $bottom={17}>Details</PanelHead>
              <DetailList>
                {DETAILS.map(([k, v]) => (
                  <DetailRow key={k}>
                    <DetailKey>{k}</DetailKey>
                    <DetailValue>{v}</DetailValue>
                  </DetailRow>
                ))}
              </DetailList>
            </PanelScroll>

            <PanelFooter>
              <FooterButton $main>
                <EyeIcon />
                Acknowled...
              </FooterButton>
              <FooterButton>
                <Archive size={30} color="#111" strokeWidth={2} />
                Dismiss
              </FooterButton>
            </PanelFooter>
          </Panel>
        </Body>

        <StatusBar>
          <StatusItem>
            <Cpu size={22} strokeWidth={2} />
            <StatusLabel>CPU</StatusLabel>
            <StatusValue>11%</StatusValue>
          </StatusItem>
          <StatusItem>
            <MemoryStick size={22} strokeWidth={2} />
            <StatusLabel>RAM</StatusLabel>
            <StatusValue>5.9 GB / 8.0 GB</StatusValue>
          </StatusItem>
          <StatusItem $icon="#f2a04f">
            <HardDrive size={24} strokeWidth={2} />
            <StatusLabel>Disk</StatusLabel>
            <StatusValue>89%</StatusValue>
          </StatusItem>
          <StatusItem $end>
            <ArrowUpDown size={24} strokeWidth={1.8} />
            <StatusLabel>Net</StatusLabel>
            <ArrowDown size={20} color="#333" strokeWidth={2} />
            <StatusValue>964 B/s</StatusValue>
            <ArrowUp size={20} color="#333" strokeWidth={2} style={{ marginLeft: 16 }} />
            <StatusValue>482 B/s</StatusValue>
          </StatusItem>
        </StatusBar>
      </Window>
    </Page>
  );
}
